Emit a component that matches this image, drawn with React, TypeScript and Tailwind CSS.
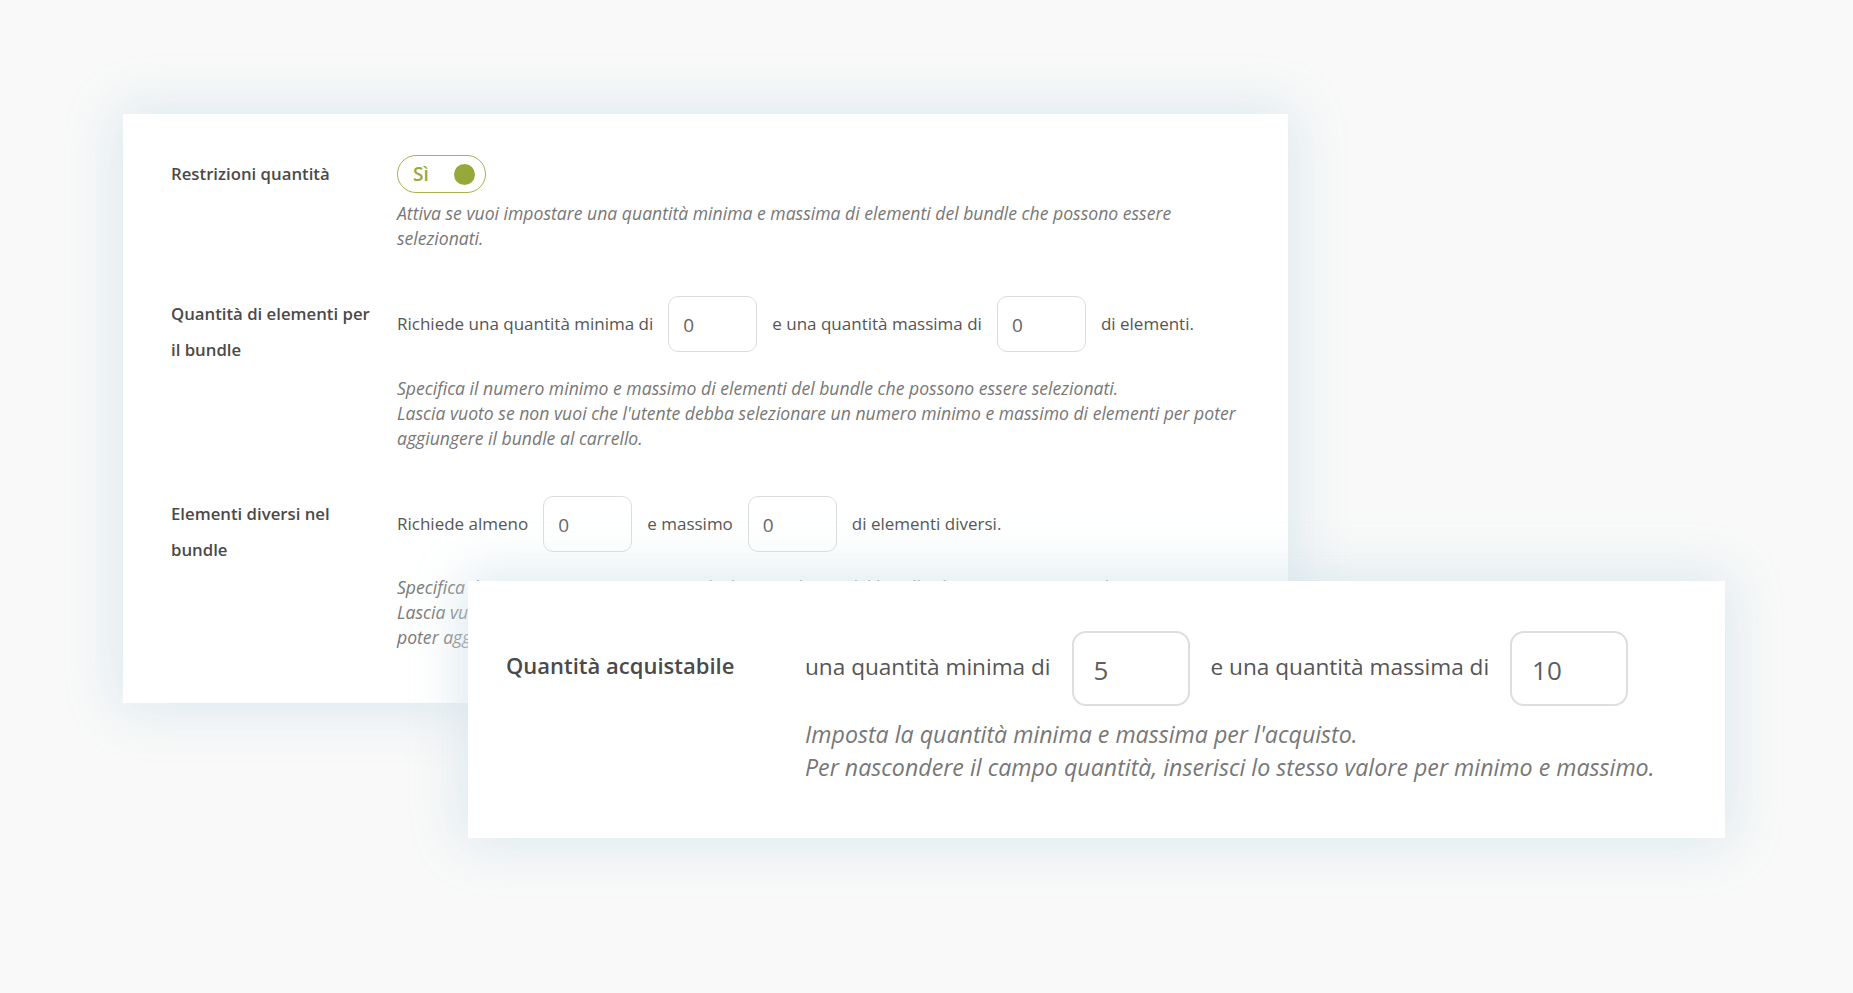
import React from "react";

function NumberBox({ value, big }: { value: string; big?: boolean }) {
  return (
    <div
      className={
        big
          ? "flex h-[75px] w-[118px] shrink-0 items-center rounded-[14px] border-2 border-[#dedede] bg-white pl-[20px] pt-[4px] text-[26px] text-[#5e5e5e]"
          : "flex h-[56px] w-[89px] shrink-0 items-center rounded-[10px] border border-[#dcdcdc] bg-white pl-[14px] pt-[3px] text-[19px] text-[#666]"
      }
    >
      {value}
    </div>
  );
}

function Toggle() {
  return (
    <div className="flex h-[38px] w-[89px] items-center justify-between rounded-full border border-[#a6b350] pl-[15px] pr-[10px]">
      <span className="text-[19px] font-semibold text-[#98a83a]">Sì</span>
      <span className="h-[21px] w-[21px] rounded-full bg-[#97a83a]" />
    </div>
  );
}

function Label({ children }: { children: React.ReactNode }) {
  return (
    <div className="w-[226px] shrink-0 text-[16.75px] font-semibold leading-[36px] text-[#4a4a4a]">
      {children}
    </div>
  );
}

function Hint({ lines }: { lines: string[] }) {
  return (
    <div className="text-[17.6px] italic leading-[25px] text-[#777]">
      {lines.map((l) => (
        <div key={l} className="whitespace-nowrap">
          {l}
        </div>
      ))}
    </div>
  );
}

function BundleSettings() {
  return (
    <div className="h-[589px] w-[1165px] bg-white px-[48px] pt-[41px] shadow-[0_0_50px_6px_rgba(214,229,235,0.85)]">
      <div className="flex">
        <Label>
          <div className="pt-[1px]">Restrizioni quantità</div>
        </Label>
        <div>
          <Toggle />
          <div className="mt-[8px]">
            <Hint
              lines={[
                "Attiva se vuoi impostare una quantità minima e massima di elementi del bundle che possono essere",
                "selezionati.",
              ]}
            />
          </div>
        </div>
      </div>

      <div className="mt-[45px] flex">
        <Label>
          Quantità di elementi per
          <br />
          il bundle
        </Label>
        <div>
          <div className="flex items-center gap-[15px] text-[17px] text-[#555]">
            <span>Richiede una quantità minima di</span>
            <NumberBox value="0" />
            <span>e una quantità massima di</span>
            <NumberBox value="0" />
            <span>di elementi.</span>
          </div>
          <div className="mt-[24px]">
            <Hint
              lines={[
                "Specifica il numero minimo e massimo di elementi del bundle che possono essere selezionati.",
                "Lascia vuoto se non vuoi che l'utente debba selezionare un numero minimo e massimo di elementi per poter",
                "aggiungere il bundle al carrello.",
              ]}
            />
          </div>
        </div>
      </div>

      <div className="mt-[45px] flex">
        <Label>
          Elementi diversi nel
          <br />
          bundle
        </Label>
        <div>
          <div className="flex items-center gap-[15px] text-[17px] text-[#555]">
            <span>Richiede almeno</span>
            <NumberBox value="0" />
            <span>e massimo</span>
            <NumberBox value="0" />
            <span>di elementi diversi.</span>
          </div>
          <div className="mt-[23px]">
            <Hint
              lines={[
                "Specifica il numero minimo e massimo di elementi diversi del bundle che possono essere selezionati.",
                "Lascia vuoto se non vuoi che l'utente debba selezionare un numero minimo e massimo di elementi diversi",
                "poter aggiungere il bundle al carrello.",
              ]}
            />
          </div>
        </div>
      </div>
    </div>
  );
}

function PurchaseQuantity() {
  return (
    <div className="relative z-10 -mt-[122px] ml-[345px] h-[257px] w-[1257px] bg-white px-[38px] pt-[50px] shadow-[0_0_50px_6px_rgba(214,229,235,0.85)]">
      <div className="flex">
        <div className="w-[299px] shrink-0 text-[22px] font-semibold leading-[68px] text-[#4a4a4a]">
          Quantità acquistabile
        </div>
        <div>
          <div className="flex items-center gap-[21px] text-[22.6px] text-[#555]">
            <span className="-mt-[3px]">una quantità minima di</span>
            <NumberBox value="5" big />
            <span className="-mt-[3px]">e una quantità massima di</span>
            <NumberBox value="10" big />
          </div>
          <div className="mt-[12px] text-[23.2px] italic leading-[33px] text-[#777]">
            <div className="whitespace-nowrap">Imposta la quantità minima e massima per l'acquisto.</div>
            <div className="whitespace-nowrap">
              Per nascondere il campo quantità, inserisci lo stesso valore per minimo e massimo.
            </div>
          </div>
        </div>
      </div>
    </div>
  );
}

export default function App() {
  return (
    <div className="h-[993px] w-full overflow-hidden bg-[#f9f9f9] font-['Open_Sans',sans-serif]">
      <div className="pl-[123px] pt-[114px]">
        <BundleSettings />
        <PurchaseQuantity />
      </div>
    </div>
  );
}
